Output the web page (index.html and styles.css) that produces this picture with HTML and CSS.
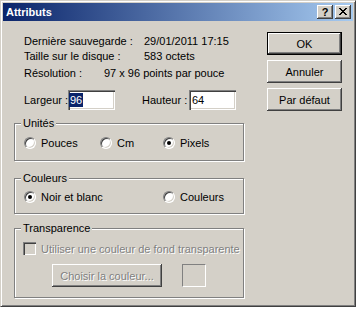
FILE: index.html
```html
<!DOCTYPE html>
<html lang="fr">
<head>
<meta charset="utf-8">
<title>Attributs</title>
<link rel="stylesheet" href="styles.css">
</head>
<body>
<div class="dialog">
  <div class="titlebar">
    <span class="title">Attributs</span>
    <div class="caption-btns">
      <div class="cbtn help">?</div>
      <div class="cbtn close">
        <svg width="8" height="7" viewBox="0 0 8 7"><path d="M0 0h2v1H0zM6 0h2v1H6zM1 1h2v1H1zM5 1h2v1H5zM2 2h4v1H2zM3 3h2v1H3zM2 4h4v1H2zM1 5h2v1H1zM5 5h2v1H5zM0 6h2v1H0zM6 6h2v1H6z" fill="#000"/></svg>
      </div>
    </div>
  </div>
  <div class="content">
    <div class="left">
      <div class="info">
        <div class="row"><span class="lbl-wide">Dernière sauvegarde :</span><span>29/01/2011 17:15</span></div>
        <div class="row"><span class="lbl-wide">Taille sur le disque :</span><span>583 octets</span></div>
        <div class="row res"><span class="lbl-res">Résolution :</span><span>97 x 96 points par pouce</span></div>
      </div>
      <div class="dims">
        <span class="lbl-w">Largeur :</span>
        <div class="field"><span class="sel">96</span></div>
        <span class="lbl-h">Hauteur :</span>
        <div class="field"><span>64</span></div>
      </div>
      <fieldset class="group g-units">
        <legend>Unités</legend>
        <div class="opts">
          <div class="opt o1"><span class="radio"></span><span>Pouces</span></div>
          <div class="opt o2"><span class="radio"></span><span>Cm</span></div>
          <div class="opt"><span class="radio checked"></span><span>Pixels</span></div>
        </div>
      </fieldset>
      <fieldset class="group g-colors">
        <legend>Couleurs</legend>
        <div class="opts">
          <div class="opt o12"><span class="radio checked"></span><span>Noir et blanc</span></div>
          <div class="opt"><span class="radio"></span><span>Couleurs</span></div>
        </div>
      </fieldset>
      <fieldset class="group g-trans">
        <legend>Transparence</legend>
        <div class="check-row"><span class="checkbox"></span><span class="disabled">Utiliser une couleur de fond transparente</span></div>
        <div class="pick-row">
          <div class="btn pick"><span class="disabled">Choisir la couleur...</span></div>
          <div class="swatch"></div>
        </div>
      </fieldset>
    </div>
    <div class="right">
      <div class="btn default">OK</div>
      <div class="btn">Annuler</div>
      <div class="btn">Par défaut</div>
    </div>
  </div>
</div>
</body>
</html>
```
FILE: styles.css
```css
html, body {
  margin: 0;
  padding: 0;
  background: #ffffff;
}
body {
  font-family: "Liberation Sans", Arial, sans-serif;
  font-size: 11px;
  color: #000;
}
.dialog {
  width: 356px;
  height: 307px;
  box-sizing: border-box;
  background: #d4d0c8;
  border: 1px solid;
  border-color: #d4d0c8 #404040 #404040 #d4d0c8;
  box-shadow: inset 1px 1px #ffffff, inset -1px -1px #808080;
  padding: 2px;
  display: flex;
  flex-direction: column;
}
.titlebar {
  height: 18px;
  flex: none;
  background: linear-gradient(to right, #0a246a, #a6caf0);
  display: flex;
  align-items: center;
  padding: 0 2px 0 3px;
  color: #fff;
  font-weight: bold;
  font-size: 11px;
}
.caption-btns {
  margin-left: auto;
  display: flex;
  gap: 2px;
}
.cbtn {
  width: 16px;
  height: 14px;
  box-sizing: border-box;
  background: #d4d0c8;
  box-shadow: inset -1px -1px #404040, inset 1px 1px #ffffff, inset -2px -2px #808080;
  display: flex;
  align-items: center;
  justify-content: center;
  color: #000;
  font-weight: bold;
  font-size: 11px;
  line-height: 14px;
}
.cbtn.help { padding-bottom: 1px; }
.cbtn.close svg { display: block; margin-top: -1px; }
.content {
  display: flex;
  flex: 1;
}
.left {
  width: 243px;
  box-sizing: border-box;
  padding: 13px 0 0 11px;
}
.info { margin-left: 10px; }
.row {
  display: flex;
  line-height: 15px;
  white-space: nowrap;
}
.row.res { margin-top: 2px; }
.lbl-wide { width: 120px; }
.lbl-res { width: 80px; }
.dims {
  display: flex;
  align-items: center;
  height: 20px;
  margin: 9px 0 0 10px;
  white-space: nowrap;
}
.dims > * { flex: none; }
.lbl-w { width: 44px; }
.lbl-h { width: 47px; margin-left: 27px; }
.field {
  width: 47px;
  height: 20px;
  box-sizing: border-box;
  background: #fff;
  box-shadow: inset 1px 1px #808080, inset 2px 2px #404040, inset -1px -1px #ffffff, inset -2px -2px #d4d0c8;
  padding-left: 3px;
  display: flex;
  align-items: center;
  line-height: 14px;
}
.field .sel {
  background: #0a246a;
  color: #fff;
  margin-left: -2px;
  padding: 0 1px;
}
.group {
  width: 230px;
  box-sizing: border-box;
  margin: 0;
  border: 1px solid #808080;
  box-shadow: inset 1px 1px #ffffff, 1px 1px #ffffff;
  padding: 6px 0 11px 9px;
  min-width: 0;
}
.group legend {
  padding: 0 2px;
  margin-left: -3px;
  line-height: 13px;
  background: #d4d0c8;
}
.g-units { margin-top: 7px; }
.g-colors { margin-top: 11px; padding-top: 5px; padding-bottom: 10px; }
.g-trans { margin-top: 8px; padding-top: 7px; padding-bottom: 10px; }
.opts {
  display: flex;
  align-items: center;
  height: 13px;
}
.opt {
  display: flex;
  align-items: center;
  gap: 5px;
  white-space: nowrap;
}
.o1 { width: 76px; }
.o2 { width: 63px; }
.o12 { width: 139px; }
.radio {
  width: 12px;
  height: 12px;
  box-sizing: border-box;
  border-radius: 50%;
  background: #fff;
  border: 1px solid;
  border-color: #808080 #ffffff #ffffff #808080;
  box-shadow: inset 1px 1px #404040, inset -1px -1px #d4d0c8;
  position: relative;
  flex: none;
}
.radio.checked::after {
  content: "";
  position: absolute;
  left: 3px;
  top: 3px;
  width: 4px;
  height: 4px;
  border-radius: 50%;
  background: #000;
}
.check-row {
  display: flex;
  align-items: center;
  gap: 5px;
  height: 13px;
  margin-left: -1px;
  white-space: nowrap;
}
.checkbox {
  width: 13px;
  height: 13px;
  box-sizing: border-box;
  background: #d4d0c8;
  box-shadow: inset 1px 1px #808080, inset 2px 2px #404040, inset -1px -1px #ffffff, inset -2px -2px #d4d0c8;
  flex: none;
}
.disabled {
  color: #808080;
  text-shadow: 1px 1px 0 #ffffff;
}
.pick-row {
  display: flex;
  margin: 9px 0 0 28px;
}
.swatch {
  width: 24px;
  height: 23px;
  box-sizing: border-box;
  border: 1px solid;
  border-color: #808080 #ffffff #ffffff #808080;
  margin-left: 20px;
}
.right {
  margin-left: 21px;
  padding-top: 11px;
  display: flex;
  flex-direction: column;
  gap: 5px;
}
.btn {
  width: 75px;
  height: 23px;
  box-sizing: border-box;
  background: #d4d0c8;
  box-shadow: inset -1px -1px #404040, inset 1px 1px #ffffff, inset -2px -2px #808080;
  display: flex;
  align-items: center;
  justify-content: center;
  white-space: nowrap;
}
.btn.pick { width: 110px; }
.btn.default {
  box-shadow: inset 0 0 0 1px #000000, inset -2px -2px #404040, inset 2px 2px #ffffff, inset -3px -3px #808080;
}
```
